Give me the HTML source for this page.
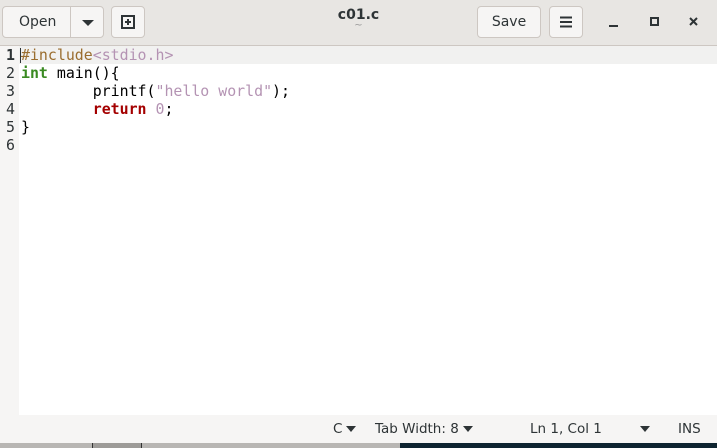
<!DOCTYPE html><html><head><style>
body{margin:0;width:717px;height:448px;overflow:hidden;font-family:"DejaVu Sans","Liberation Sans",sans-serif;background:#fff;position:relative}
.hdr{position:absolute;left:0;top:0;width:717px;height:45px;background:#e8e6e3;border-bottom:1px solid #cdc7c2}
.btn{position:absolute;top:6px;height:32px;background:#f6f5f4;border:1px solid #cdc7c2;border-radius:4px;box-sizing:border-box;font-size:14px;color:#2e3436;text-align:center;line-height:30px}
.title{position:absolute;left:0;width:717px;top:7px;text-align:center;font-weight:bold;font-size:14px;color:#2e3436}
.gut{position:absolute;left:0;top:46px;width:19px;height:369px;background:#f6f5f4}
.cur{position:absolute;left:19px;top:46px;width:698px;height:18px;background:#f1f1f0}
pre{position:absolute;margin:0;font-family:"DejaVu Sans Mono",monospace;font-size:14.9px;line-height:18px;top:46px}
.st{position:absolute;left:0;top:415px;width:717px;height:28px;background:#f6f5f4;font-size:13.5px;color:#2e3436}
.st span{position:absolute;top:6px}
.tri{display:inline-block;width:0;height:0;border-left:5px solid transparent;border-right:5px solid transparent;border-top:6px solid #2e3436;vertical-align:middle;margin-left:4px}
</style></head><body>
<div class="hdr">
<div class="btn" style="left:2px;width:102px;text-align:left"><span style="padding-left:16px">Open</span><div style="position:absolute;left:67px;top:0;width:1px;height:30px;background:#cdc7c2"></div><div style="position:absolute;left:79px;top:13px;border-left:6px solid transparent;border-right:6px solid transparent;border-top:6px solid #2e3436"></div></div>
<div class="btn" style="left:111px;width:34px"><svg width="14" height="14" viewBox="0 0 14 14" style="margin-top:8px"><rect x="1" y="1" width="12" height="12" fill="none" stroke="#2e3436" stroke-width="2"/><path d="M7 4v6M4 7h6" stroke="#2e3436" stroke-width="2"/></svg></div>
<div class="title">c01.c<div style="font-weight:normal;font-size:10px;color:#999;line-height:6px">~</div></div>
<div class="btn" style="left:477px;width:64px">Save</div>
<div class="btn" style="left:549px;width:34px"><svg width="12" height="12" viewBox="0 0 12 12" style="margin-top:9px"><path d="M0 1.5h12M0 6h12M0 10.5h12" stroke="#2e3436" stroke-width="2"/></svg></div>
<div style="position:absolute;left:609px;top:25px;width:9px;height:2px;background:#2e3436"></div>
<div style="position:absolute;left:650px;top:17px;width:5px;height:5px;border:2px solid #2e3436"></div>
<svg style="position:absolute;left:689px;top:17px" width="9" height="9"><path d="M1 1l7 7M8 1l-7 7" stroke="#2e3436" stroke-width="2"/></svg>
</div>
<div class="gut"></div><div class="cur"></div>
<pre style="left:6px;color:#2e3436"><b>1</b>
2
3
4
5
6</pre>
<div style="position:absolute;left:20px;top:48px;width:1px;height:15px;background:#2e3436"></div>
<pre style="left:21px;color:#000"><span style="color:#9a6d2e">#include</span><span style="color:#b493b3">&lt;stdio.h&gt;</span>
<b style="color:#3a8a22">int</b> main(){
        printf(<span style="color:#b493b3">"hello world"</span>);
        <b style="color:#a40000">return</b> <span style="color:#b493b3">0</span>;
}
</pre>
<div class="st"><span style="left:333px">C<i class="tri"></i></span><span style="left:375px">Tab Width: 8<i class="tri"></i></span><span style="left:530px">Ln 1, Col 1</span><span style="left:636px"><i class="tri"></i></span><span style="left:678px">INS</span></div>
<div style="position:absolute;left:0;top:443px;width:400px;height:5px;background:#b8b6b3"></div>
<div style="position:absolute;left:92px;top:443px;width:48px;height:5px;background:#9d9b98;border-left:1px solid #333;border-right:1px solid #333"></div>
<div style="position:absolute;left:400px;top:443px;width:317px;height:5px;background:#0e2430"></div>
</body></html>
